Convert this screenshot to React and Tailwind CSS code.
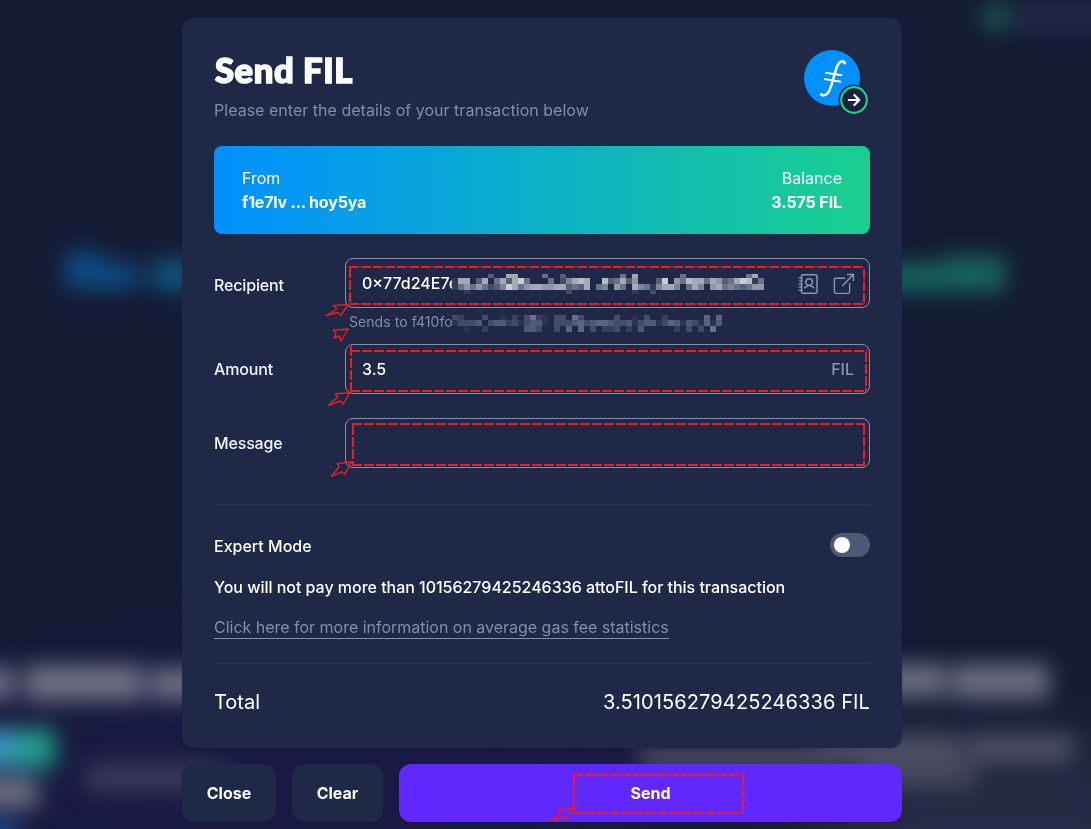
import React from "react";

const RECIPIENT_MOSAIC = {
  heights: [4, 6, 6, 4],
  rows: [
    "0000003007700004003000000000407000000040000000000470",
    "1770370473794000402578700834736000390648774763479814",
    "1464642359746776677343704506407541577504750674543466",
    "0010000000000000000200000000001002000000000000000000",
  ],
};

const SENDS_MOSAIC = {
  heights: [5, 6, 6],
  rows: [
    "320003001020362103306300000300103002000000505",
    "133340344231344103334534554334134413541431514",
    "001002000000443003050503022302040000020303060",
  ],
};

function Mosaic({ data, color, className }) {
  const cols = data.rows[0].length;
  const total = data.heights.reduce((a, b) => a + b, 0);
  let y = 0;
  return (
    <svg
      className={className}
      width={cols * 6}
      height={total}
      shapeRendering="crispEdges"
      aria-hidden="true"
    >
      {data.rows.map((row, r) => {
        const top = y;
        y += data.heights[r];
        return row.split("").map((v, c) =>
          v === "0" ? null : (
            <rect
              key={r + "-" + c}
              x={c * 6}
              y={top}
              width="6"
              height={data.heights[r]}
              fill={color}
              opacity={Number(v) / 10}
            />
          )
        );
      })}
    </svg>
  );
}

function Backdrop() {
  return (
    <svg className="absolute inset-0 bg-[#141b34]" width="1091" height="829" aria-hidden="true">
      <defs>
        <filter id="soft" x="-200" y="-200" width="1500" height="1300" filterUnits="userSpaceOnUse" colorInterpolationFilters="sRGB">
          <feGaussianBlur stdDeviation="11" />
        </filter>
        <filter id="wide" x="-400" y="300" width="1900" height="900" filterUnits="userSpaceOnUse" colorInterpolationFilters="sRGB">
          <feGaussianBlur stdDeviation="50" />
        </filter>
        <linearGradient id="pill">
          <stop offset=".3" stopColor="#4590cc" />
          <stop offset="1" stopColor="#12a374" />
        </linearGradient>
      </defs>
      <g filter="url(#wide)">
        <ellipse cx="330" cy="780" rx="430" ry="110" fill="#1b1a48" opacity=".85" />
        <rect x="820" y="750" width="360" height="200" fill="#2a2f4a" opacity=".9" />
      </g>
      <g filter="url(#soft)">
        <path d="M64 252H104V263H138V289H66Z" fill="#0d4d87" />
        <rect x="152" y="259" width="70" height="32" fill="#11527e" />
        <path d="M860 263H944V256H1005V292H860Z" fill="#17655e" />
        <circle cx="996" cy="17" r="14" fill="#1c5a55" />
        <rect x="1014" y="4" width="100" height="26" fill="#252a48" />
        <rect x="-40" y="667" width="54" height="32" fill="#6f7184" />
        <rect x="25" y="665" width="118" height="36" fill="#6f7184" />
        <rect x="150" y="668" width="70" height="32" fill="#6d6f82" />
        <rect x="-40" y="729" width="95" height="39" fill="url(#pill)" />
        <rect x="-40" y="778" width="78" height="30" fill="#6e7084" />
        <rect x="-40" y="822" width="58" height="40" fill="#134f96" />
        <rect x="86" y="764" width="140" height="27" fill="#3c3b5b" />
        <rect x="870" y="664" width="76" height="33" fill="#6b6e82" />
        <rect x="952" y="664" width="97" height="35" fill="#6b6e82" />
        <rect x="820" y="734" width="140" height="31" fill="#4c4f64" />
        <rect x="966" y="734" width="108" height="29" fill="#4c4f64" />
        <rect x="860" y="764" width="116" height="24" fill="#45485d" />
        <rect x="640" y="744" width="200" height="28" fill="#474a5e" />
      </g>
    </svg>
  );
}

function FilecoinBadge() {
  return (
    <svg className="shrink-0" width="66" height="64" viewBox="0 0 66 64" aria-hidden="true">
      <circle cx="28" cy="28" r="28" fill="#0090ff" />
      <g transform="translate(0 -2)">
        <path d="M41 15C38.500 11.800 35.200 13.500 33 18.500C30.800 24 29.500 31 27.300 37.500C25.200 44.200 22.200 49 17.300 46.800" fill="none" stroke="#fff" strokeWidth="2.500" strokeLinecap="round" />
        <path d="M21.300 24.700L38.200 27.300M20.200 31L37 33.700" fill="none" stroke="#fff" strokeWidth="2" />
        <circle cx="40.800" cy="15" r="1.400" fill="#fff" />
        <circle cx="17.500" cy="46.600" r="1.500" fill="#fff" />
      </g>
      <circle cx="50" cy="50" r="15.500" fill="#1a2240" />
      <circle cx="50" cy="50" r="12.800" fill="#1a2240" stroke="#1ad08f" strokeWidth="2.200" />
      <path d="M44.800 50H55M50.300 45L55.300 50L50.300 55" fill="none" stroke="#fff" strokeWidth="2.200" strokeLinecap="round" strokeLinejoin="round" />
    </svg>
  );
}

function ContactIcon() {
  return (
    <svg width="20" height="22" viewBox="0 0 20 22" fill="none" stroke="#8b93ad" strokeWidth="1.5" aria-hidden="true">
      <rect x="3.500" y="1.700" width="15.500" height="18.600" rx="1" />
      <path d="M.5 4.800h4M.5 8h4M.5 11.100h4M.5 14.200h4M.5 17.300h4" strokeWidth="1.200" />
      <circle cx="11.200" cy="9" r="3.300" />
      <path d="M6.400 15.600c.6-1.600 1.700-2.400 3.300-2.700v-1M16 15.600c-.6-1.600-1.700-2.400-3.300-2.700v-1" />
    </svg>
  );
}

function ExternalIcon() {
  return (
    <svg width="22" height="22" viewBox="0 0 22 22" fill="none" stroke="#8b93ad" strokeWidth="1.400" aria-hidden="true">
      <path d="M12 5.200H2.800C1.800 5.200 1.400 5.700 1.400 6.600V19c0 .9.5 1.400 1.400 1.400h12.400c.9 0 1.400-.5 1.400-1.400V10" />
      <path d="M9.300 13L20.300 1.600M14 1.500h6.400V8" />
    </svg>
  );
}

function Annotations() {
  return (
    <svg
      className="pointer-events-none absolute inset-0"
      width="1091"
      height="829"
      fill="none"
      stroke="#ed1c24"
      aria-hidden="true"
    >
      <g strokeWidth="2" strokeDasharray="10 2">
        <path d="M349 267H865M864 269V304M349 304H865M350 268V304" />
        <path d="M350 351H867M866 352V392M350 391H867M351 346V392" />
        <path d="M352 424H865M864 425V465M352 465H865M353 425V465" />
        <path d="M573 775H744M743 776V814M573 813H744M574 776V814" />
      </g>
      <g strokeWidth="1.400" strokeLinejoin="round">
        <path d="M348 304.500L333.500 305.500L337 309L326.500 315.500L338 312.500L341 315.500Z" />
        <path d="M348.300 329L333.500 330.300L336 334L334 338L339.500 336L340.700 341Z" />
        <path d="M350 392.700L335.500 393.800L337.500 397.300L328.700 405.300L340.500 401L343.300 404Z" />
        <path d="M352 461.700L337.300 463.700L339 467.300L331.500 476.300L342 471.700L344.500 474.300Z" />
        <path d="M574 808.300L558.300 809.500L560.700 813L552.500 820.500L563.300 816.500L565 820.700Z" />
      </g>
    </svg>
  );
}

function Field({ label, labelClass = "", children }) {
  return (
    <div className="flex items-center">
      <label className={"w-[131px] shrink-0 font-medium tracking-[-0.01em] text-[#f3f4f8] " + labelClass}>{label}</label>
      <div className="flex h-[50px] flex-1 items-center rounded-lg border border-[#8790aa] pr-[15px] pl-4 font-medium text-white">
        {children}
      </div>
    </div>
  );
}

export default function App() {
  return (
    <main className="relative h-[829px] w-[1091px] overflow-hidden font-['Inter',sans-serif] text-base leading-6 text-white">
      <Backdrop />
      <div className="relative ml-[182px] w-[720px] pt-[18px]">
        <section className="h-[730px] rounded-xl bg-[#1f2846] px-8 pt-8 shadow-sm">
          <header className="flex h-24 justify-between">
            <div>
              <h1 className="pl-px font-['Lato',sans-serif] text-[34.5px] leading-[39px] font-black tracking-[0.018em] [-webkit-text-stroke:1.6px_white]">Send FIL</h1>
              <p className="mt-[9px] tracking-[0.02px] text-[#858da6]">Please enter the details of your transaction below</p>
            </div>
            <FilecoinBadge />
          </header>

          <div className="flex h-[88px] items-center justify-between rounded-lg bg-linear-to-r/srgb from-[#0090ff] to-[#1ad08f] px-7">
            <div>
              <p>From</p>
              <p className="font-bold tracking-[-0.2px]">f1e7lv ... hoy5ya</p>
            </div>
            <div className="text-right">
              <p>Balance</p>
              <p className="font-bold tracking-[-0.1px]">3.575 FIL</p>
            </div>
          </div>

          <div className="pt-6">
            <Field label="Recipient" labelClass="pt-1">
              <span className="w-[90px] whitespace-nowrap">0×77d24E7e</span>
              <Mosaic data={RECIPIENT_MOSAIC} color="#dedee6" className="relative mt-0.5 shrink-0 bg-[#1f2846]" />
              <span className="-mr-px ml-auto flex items-center gap-[15px] pt-0.5">
                <ContactIcon />
                <ExternalIcon />
              </span>
            </Field>
            <div className="flex h-9 items-start pt-[3px] pl-[135px] text-sm text-[#858da6]">
              <span className="w-[103px] tracking-[0.06px] whitespace-nowrap leading-[22px]">Sends to f410fo</span>
              <Mosaic data={SENDS_MOSAIC} color="#98a0ba" className="mt-1 shrink-0" />
            </div>
            <Field label="Amount">
              <span>3.5</span>
              <span className="ml-auto text-[#8b93ad]">FIL</span>
            </Field>
            <div className="h-6" />
            <Field label="Message" />
          </div>

          <div className="mt-9 h-[160px] border-y border-[#2c3552] pt-7">
            <div className="flex items-start justify-between">
              <span className="pt-px font-medium">Expert Mode</span>
              <span className="flex h-6 w-10 items-center rounded-full bg-[#4f5876] px-1">
                <span className="size-4 rounded-full bg-white" />
              </span>
            </div>
            <p className="mt-[17px] font-medium tracking-[-0.025px]">You will not pay more than 10156279425246336 attoFIL for this transaction</p>
            <a className="mt-[17px] inline-block border-b border-[#858da6] pt-px pb-px leading-[20px] tracking-[-0.015px] text-[#858da6]">
              Click here for more information on average gas fee statistics
            </a>
          </div>
          <div className="flex items-center justify-between pt-6 text-xl leading-7">
            <span>Total</span>
            <span className="tracking-[0.11px]">3.510156279425246336 FIL</span>
          </div>
        </section>

        <div className="mt-4 flex h-[58px] gap-4 font-bold">
          <button className="w-[94px] rounded-xl bg-[#1f2846] shadow-sm">Close</button>
          <button className="w-[91px] rounded-xl bg-[#1f2846] shadow-sm">Clear</button>
          <button className="flex-1 rounded-xl bg-[#6127ff] shadow-sm">Send</button>
        </div>
      </div>
      <Annotations />
    </main>
  );
}
